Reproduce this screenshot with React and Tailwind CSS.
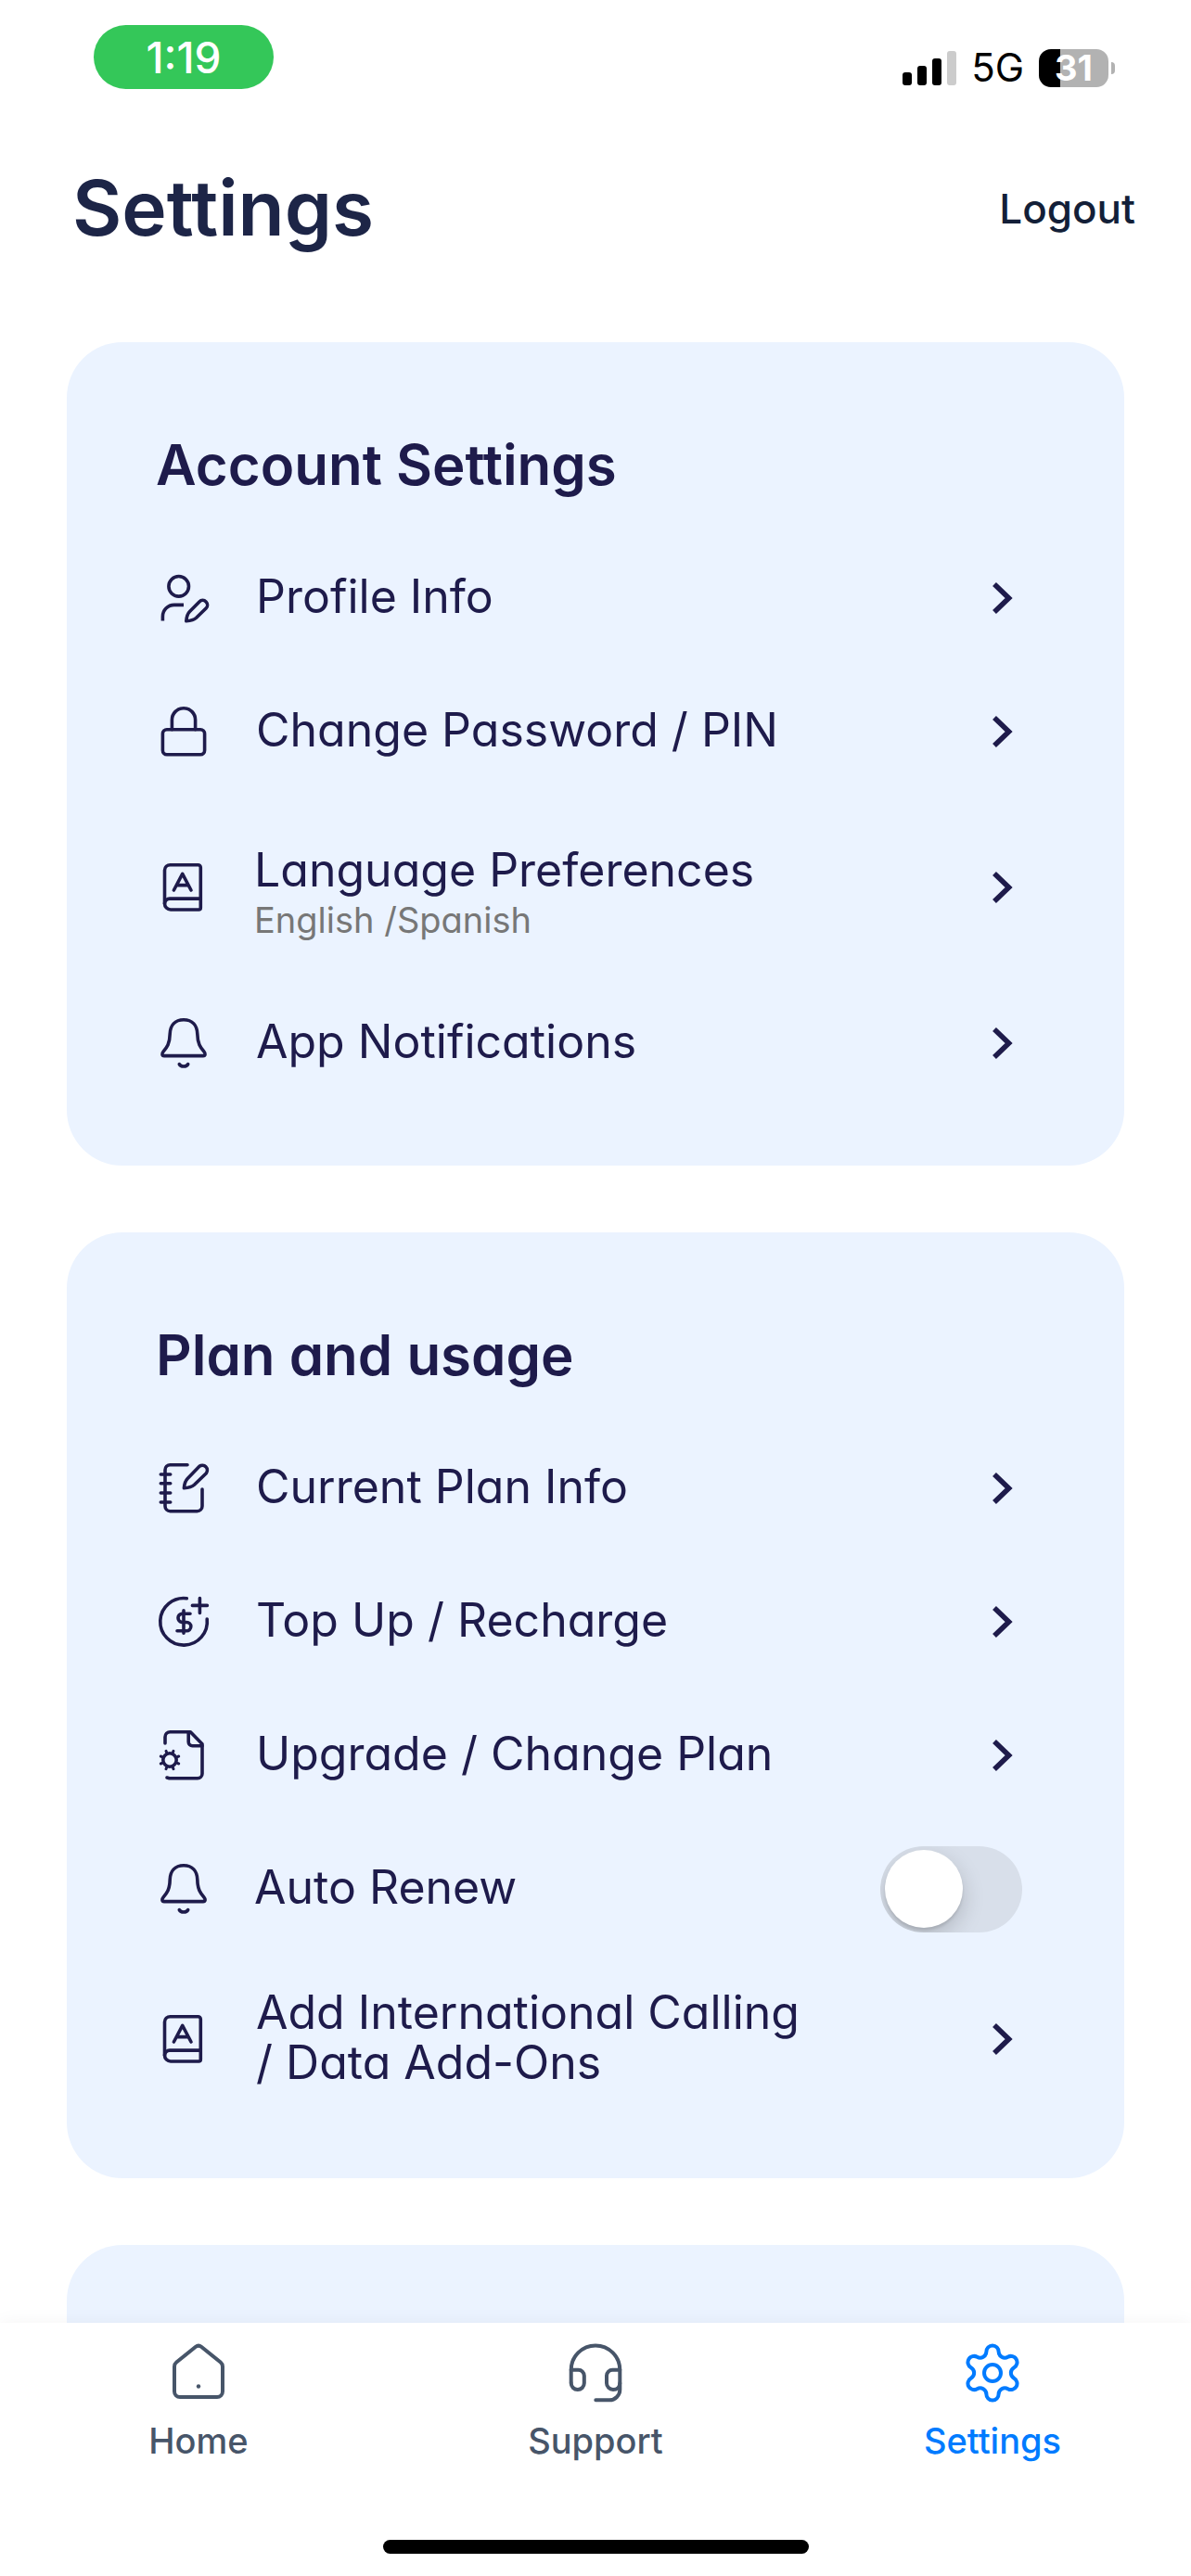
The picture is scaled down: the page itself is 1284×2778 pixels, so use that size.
import { useState } from "react";

/* Outline icons, 60 x 60 grid */
function Glyph({ children }) {
  return (
    <svg
      viewBox="0 0 60 60"
      className="size-15 shrink-0"
      fill="none"
      stroke="currentColor"
      strokeWidth="3.6"
      strokeLinecap="round"
      strokeLinejoin="round"
      aria-hidden="true"
    >
      {children}
    </svg>
  );
}

const ProfileIcon = () => (
  <Glyph>
    <circle cx="24.7" cy="17.3" r="10.8" />
    <path strokeLinecap="butt" d="M7.4 54.5V50A12.4 12.4 0 0 1 19.8 37.4H30" />
    <path d="M32.8 54.8c.3-4.6 1.2-7.8 3.7-10.3L46.9 33.9a5 5 0 0 1 7.2 7.2L43.6 51.3c-2.6 2.4-6 3.2-10.8 3.5z" />
  </Glyph>
);

const LockIcon = () => (
  <Glyph>
    <rect x="7.4" y="27.7" width="45.2" height="27" rx="4.5" />
    <path d="M17.4 27.7V17.3a12.6 12.6 0 0 1 25.2 0v10.4" />
  </Glyph>
);

const LanguageIcon = () => (
  <Glyph>
    <path d="M46.3 54H16a6.5 6.5 0 0 1-6.5-6.5V11.5A6 6 0 0 1 15.5 5.7h30a2.8 2.8 0 0 1 2.8 2.8v43.5a2 2 0 0 1-2 2z" />
    <path d="M9.5 47.5a5.4 5.4 0 0 1 5.4-5.4h33.4" />
    <path d="M19.4 33l9.3-17.6L38 33M22.6 27.6h12.2" />
  </Glyph>
);

const BellIcon = () => (
  <Glyph>
    <path d="M30 4.7C20.6 4.7 15.5 11 15.2 20 15 30.5 12 34.3 8.2 38.8c-2 2.4-1.6 4.8.8 4.8h42c2.4 0 2.8-2.4.8-4.8C48 34.3 45 30.5 44.8 20 44.5 11 39.4 4.7 30 4.7z" />
    <path d="M25.3 52.6c1.6 3.2 7.8 3.2 9.4 0" />
  </Glyph>
);

const NotebookIcon = () => (
  <Glyph>
    <path d="M34 4.7H15.5A5.5 5.5 0 0 0 10 10.200v39a5.500 5.500 0 0 0 5.500 5.500h29a5.500 5.500 0 0 0 5.500-5.500V31" />
    <path d="M5.300 15h10.400M5.300 24.800h10.400M5.300 35h10.400M5.300 45h10.400" />
    <path d="M30.400 29.800c.3-4.800 1.300-7.900 3.800-10.400L47 6.300a5.300 5.300 0 0 1 7.400 7.400L41.400 26.300c-2.600 2.400-6 3.200-11 3.500z" />
  </Glyph>
);

const TopUpIcon = () => (
  <Glyph>
    <path d="M33.300 4.700A25.300 25.300 0 1 0 55.200 27" />
    <path d="M47.400 4.500v16M39.400 12.400h16" />
    <path d="M37 21.200h-9a4.700 4.700 0 0 0 0 9.300h5.200a4.600 4.600 0 0 1 0 9.200H23M30 17.800v24.400" />
  </Glyph>
);

const FileGearIcon = () => (
  <Glyph>
    <path d="M10 17V10.200a5.500 5.500 0 0 1 5.500-5.500h21.800L50 17.800v31.900a5 5 0 0 1-5 5H14.500l-2.500-.7" />
    <path d="M35.200 5v10.600a4.200 4.200 0 0 0 4.200 4.200H50" />
    <circle cx="15" cy="35" r="7.200" />
    <path
      strokeWidth="3"
      d="M18.200 27.400l.8-2.100M22.600 31.800l2.100-.8M22.600 38.200l2.100.8M18.200 42.600l.8 2.100M11.800 42.600l-.8 2.100M7.400 38.200l-2.100.8M7.400 31.800l-2.100-.8M11.800 27.400l-.8-2.100"
    />
  </Glyph>
);

function Chevron() {
  return (
    <svg
      viewBox="0 0 72 60"
      className="h-15 w-18 shrink-0"
      fill="none"
      stroke="currentColor"
      strokeWidth="5.600"
      aria-hidden="true"
    >
      <path d="M28 15l15.600 15L28 45" />
    </svg>
  );
}

/* Navigation icons, 64 x 64 grid */
function NavGlyph({ children }) {
  return (
    <svg
      viewBox="0 0 64 64"
      className="size-16"
      fill="none"
      stroke="currentColor"
      strokeWidth="4"
      strokeLinecap="round"
      strokeLinejoin="round"
      aria-hidden="true"
    >
      {children}
    </svg>
  );
}

const HomeIcon = () => (
  <NavGlyph>
    <path d="M29 3.800L8.200 20.500A6 6 0 0 0 6 25.200v26.800a6 6 0 0 0 6 6h40a6 6 0 0 0 6-6V25.200a6 6 0 0 0-2.200-4.700L35 3.800a4.800 4.800 0 0 0-6 0z" />
    <circle cx="32" cy="46.500" r="2.200" fill="currentColor" stroke="none" />
  </NavGlyph>
);

const HeadsetIcon = () => (
  <NavGlyph>
    <path d="M5.700 42.500V28.700a26.300 26.300 0 0 1 52.600 0V50A11.300 11.300 0 0 1 47 61.300H32.300" />
    <path d="M5.700 28.700h7.800a6.300 6.300 0 0 1 6.300 6.300v8a7 7 0 0 1-14.100 0M58.300 28.700h-8a6.300 6.300 0 0 0-6.300 6.300v8a7 7 0 0 0 7 7c4.300 0 7.300-3 7.300-7" />
  </NavGlyph>
);

function polar(step, tangent, radius) {
  const a = (step * Math.PI) / 3;
  const x = 32 + tangent * Math.cos(a) + radius * Math.sin(a);
  const y = 32 + tangent * Math.sin(a) - radius * Math.cos(a);
  return `${x.toFixed(2)} ${y.toFixed(2)}`;
}

const gearPath =
  [0, 1, 2, 3, 4, 5]
    .map(
      (k) =>
        `${k === 0 ? "M" : "L"}${polar(k, -6.6, 23)}A6.6 6.6 0 0 1 ${polar(k, 6.6, 23)}C${polar(k, 6.6, 17.8)} ${polar(k + 1, -6.6, 17.8)} ${polar(k + 1, -6.6, 23)}`
    )
    .join("") + "Z";

const GearIcon = () => (
  <NavGlyph>
    <path d={gearPath} />
    <circle cx="32" cy="32" r="9" />
  </NavGlyph>
);

function StatusBar() {
  return (
    <div className="flex items-start justify-between pt-[27px] pr-[82px] pl-[101px]">
      <div className="flex h-[69px] w-[194px] items-center justify-center rounded-full bg-[#34c759] text-[46px] leading-none font-medium text-white">
        1:19
      </div>
      <div className="mt-6 flex items-center gap-4 text-black">
        <svg viewBox="0 0 58 38" className="h-[38px] w-[58px]" aria-hidden="true">
          <rect x="0" y="24" width="10" height="14" rx="3" />
          <rect x="16" y="17" width="10" height="21" rx="3" />
          <rect x="32" y="9" width="10" height="29" rx="3" />
          <rect x="48" y="1" width="10" height="37" rx="3" fill="#ccc" />
        </svg>
        <span className="text-[42px] leading-[44px]">5G</span>
        <div className="flex items-center gap-[3px]">
          <div className="flex h-[41px] w-[75px] items-center justify-center rounded-[13px] bg-[linear-gradient(90deg,#000_31%,#b2b2b2_31%)] text-[38px] leading-none font-bold text-white">
            31
          </div>
          <div className="h-[13px] w-1 rounded-r-full bg-[#b2b2b2]" />
        </div>
      </div>
    </div>
  );
}

const labelClass = "block max-w-[610px] text-[50px] leading-[54px]";

function LinkRow({ icon: Icon, label, note }) {
  return (
    <li>
      <button type="button" className="flex min-h-36 w-full items-center py-[34px] text-left">
        <Icon />
        <span className={note ? "ml-[46px] flex-1 pt-4" : "ml-12 flex-1 pb-1"}>
          <span className={labelClass}>{label}</span>
          {note && <span className="block text-[38px] leading-[54px] text-[#777777]">{note}</span>}
        </span>
        <Chevron />
      </button>
    </li>
  );
}

function ToggleRow({ icon: Icon, label, id }) {
  const [on, setOn] = useState(false);
  return (
    <li className="flex min-h-36 items-center">
      <Icon />
      <label htmlFor={id} className="ml-[46px] flex-1 pb-1">
        <span className={labelClass}>{label}</span>
      </label>
      <input
        id={id}
        type="checkbox"
        role="switch"
        checked={on}
        onChange={(e) => setOn(e.target.checked)}
        className="mr-[14px] flex h-[93px] w-[153px] shrink-0 cursor-pointer appearance-none items-center overflow-hidden rounded-full bg-[#d8dfea] px-[5px] before:size-[84px] before:rounded-full before:bg-white before:shadow-[0_9px_24px_rgba(0,0,0,0.18),0_3px_3px_rgba(0,0,0,0.10)] checked:justify-end checked:bg-[#34c759]"
      />
    </li>
  );
}

function Card({ title, children }) {
  return (
    <section className="rounded-[60px] bg-[#ebf3ff] px-24 pt-24 pb-15 text-[#1e1b4b]">
      <h2 className="mb-9 text-[60px] leading-[72px] font-semibold">{title}</h2>
      <ul>{children}</ul>
    </section>
  );
}

function NavItem({ icon: Icon, label, active }) {
  return (
    <a
      href={`#${label.toLowerCase()}`}
      aria-current={active ? "page" : undefined}
      className={
        active
          ? "flex flex-1 flex-col items-center gap-4 text-[#007bff]"
          : "flex flex-1 flex-col items-center gap-4 text-[#475569]"
      }
    >
      <Icon />
      <span className="text-[38px] leading-[50px] font-medium">{label}</span>
    </a>
  );
}

export default function App() {
  return (
    <div className="flex min-h-screen flex-col bg-white font-['Inter','Liberation_Sans',sans-serif] [font-feature-settings:'cv11']">
      <StatusBar />
      <header className="flex items-center justify-between pt-[77px] pr-[60px] pb-[92px] pl-[78px]">
        <h1 className="text-[82px] leading-[104px] font-semibold text-[#1d2547]">Settings</h1>
        <button type="button" className="text-[44px] leading-[60px] font-medium text-[#131f38]">
          Logout
        </button>
      </header>

      <main className="flex flex-1 flex-col gap-18 px-18">
        <Card title="Account Settings">
          <LinkRow icon={ProfileIcon} label="Profile Info" />
          <LinkRow icon={LockIcon} label="Change Password / PIN" />
          <LinkRow icon={LanguageIcon} label="Language Preferences" note="English /Spanish" />
          <LinkRow icon={BellIcon} label="App Notifications" />
        </Card>
        <Card title="Plan and usage">
          <LinkRow icon={NotebookIcon} label="Current Plan Info" />
          <LinkRow icon={TopUpIcon} label="Top Up / Recharge" />
          <LinkRow icon={FileGearIcon} label="Upgrade / Change Plan" />
          <ToggleRow icon={BellIcon} label="Auto Renew" id="auto-renew" />
          <LinkRow
            icon={LanguageIcon}
            label={
              <>
                Add International Calling
                <br />/ Data Add-Ons
              </>
            }
          />
        </Card>
        <div className="min-h-20 flex-1 rounded-t-[60px] bg-[#ebf3ff]" />
      </main>

      <nav className="relative bg-white pt-[22px] pb-6 shadow-[0_-2px_18px_rgba(0,0,0,0.04)]">
        <div className="flex">
          <NavItem icon={HomeIcon} label="Home" />
          <NavItem icon={HeadsetIcon} label="Support" />
          <NavItem icon={GearIcon} label="Settings" active />
        </div>
        <div className="mx-auto mt-[82px] h-[15px] w-[459px] rounded-full bg-black" />
      </nav>
    </div>
  );
}
